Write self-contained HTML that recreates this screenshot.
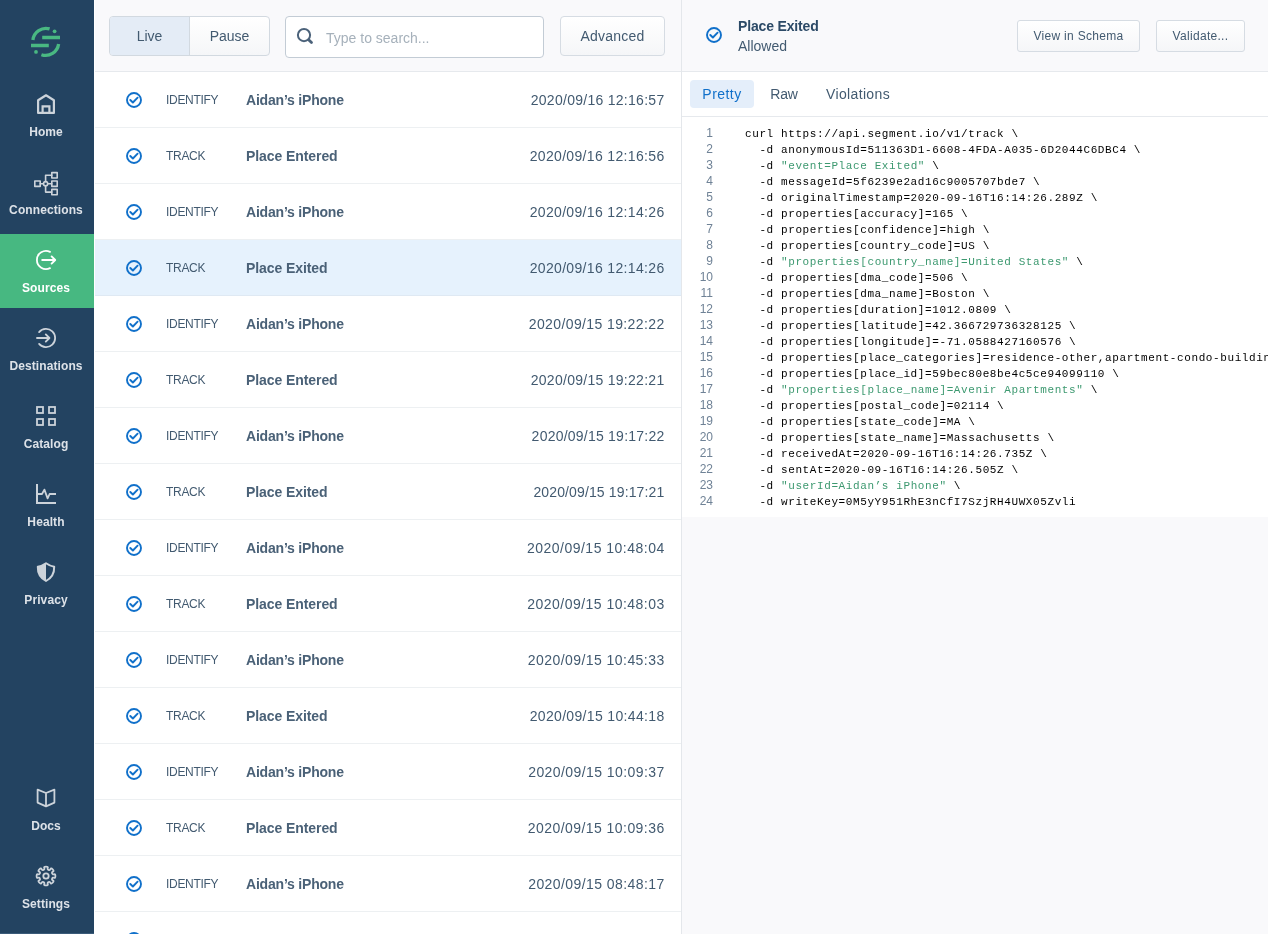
<!DOCTYPE html>
<html lang="en">
<head>
<meta charset="utf-8">
<title>Segment Debugger</title>
<style>
*{box-sizing:border-box;margin:0;padding:0}
html,body{width:1268px;height:934px;overflow:hidden;background:#fff;font-family:"Liberation Sans",Arial,sans-serif;color:#425a70}
#app{position:relative;width:1268px;height:934px;overflow:hidden;will-change:transform}
/* sidebar */
#side{position:absolute;left:0;top:0;width:94px;height:934px;background:#234361;border-bottom:1px solid #3b5b79}
#logo{position:absolute;left:29px;top:25px;width:34px;height:34px}
.nav{position:absolute;left:0;width:92px;height:74px;text-align:center;color:#dde2e8}
.nav.active{background:#47b881;color:#fff;width:94px}
.nav svg{position:absolute;left:34px;top:14px;width:24px;height:24px;fill:none;stroke:currentColor;stroke-width:1.8;stroke-linecap:round;stroke-linejoin:round;overflow:visible;color:#ccd3da}
.nav.active svg{color:#fff}
.nav span{position:absolute;left:0;width:92px;top:46px;font-size:12px;font-weight:bold;line-height:16px;letter-spacing:.1px}
/* list */
#list{position:absolute;left:94px;top:0;width:588px;height:934px;background:#fff;border-right:1px solid #e4e7eb}
#tool{position:absolute;left:1px;top:0;width:586px;height:72px;background:#f9f9fb;border-bottom:1px solid #e6e9ed}
.btn{position:absolute;height:40px;border:1px solid #d6dce3;border-radius:4px;background:linear-gradient(#fff,#f5f6f8);color:#425a70;font-size:14px;line-height:38px;text-align:center}
#seg{position:absolute;left:14px;top:16px;width:161px;height:40px;border:1px solid #d2d9e0;border-radius:4px;overflow:hidden;background:linear-gradient(#fff,#f5f6f8)}
#seg div{position:absolute;top:0;height:38px;line-height:38px;font-size:14px;text-align:center;color:#425a70}
#seg .a{left:0;width:80px;background:#e4ecf6;border-right:1px solid #d2d9e0}
#seg .b{left:80px;width:79px}
#search{position:absolute;left:190px;top:16px;width:259px;height:42px;border:1px solid #c3ccd5;border-radius:4px;background:#fff}
#search svg{position:absolute;left:11px;top:11px;width:16px;height:16px;overflow:visible}
#search span{position:absolute;left:40px;top:1px;line-height:40px;font-size:14px;color:#a6b1bb}
.row{position:absolute;left:1px;width:586px;height:56px;border-bottom:1px solid #edf0f2}
.row.sel{background:#e6f2fd;border-bottom-color:#dfe9f3}
.row svg{position:absolute;left:31px;top:19.5px;width:16px;height:16px}
.row .t{position:absolute;left:71px;top:0;line-height:56px;font-size:12px;color:#425a70;letter-spacing:-.3px}
.row .n{position:absolute;left:151px;top:0;line-height:56px;font-size:14px;font-weight:bold;color:#4a6177;letter-spacing:-.2px}
.row .d{position:absolute;right:16.600px;top:0;line-height:56px;font-size:14px;color:#425a70;letter-spacing:.2px}
/* detail */
#det{position:absolute;left:682px;top:0;width:586px;height:934px;background:#f9f9fb}
#dh{position:absolute;left:0;top:0;width:586px;height:72px;background:#f9f9fb;border-bottom:1px solid #e6e9ed}
#dh .ic{position:absolute;left:24px;top:27px;width:16px;height:16px}
#dh .ic svg{display:block;width:16px;height:16px}
.btn.sm{height:32px;line-height:30px;font-size:12px;border-radius:3px;letter-spacing:.3px}
#dh .ti{position:absolute;left:56px;top:17px;font-size:14px;font-weight:bold;line-height:18px;color:#2c4a67;letter-spacing:-.16px}
#dh .su{position:absolute;left:56px;top:37px;font-size:14px;line-height:18px;color:#425a70}
#tabs{position:absolute;left:0;top:72px;width:586px;height:45px;background:#fff;border-bottom:1px solid #e6e9ed}
#tabs div{position:absolute;top:8px;height:28px;line-height:28px;font-size:14px;color:#425a70;border-radius:4px;text-align:center}
#tabs .on{background:#e4eefa;color:#1070ca}
#code{position:absolute;left:0;top:117px;width:586px;height:400px;background:#fff;overflow:hidden}
#code .ln{position:absolute;left:0;width:31px;text-align:right;font-size:12px;line-height:16px;color:#6f8296}
#code pre{position:absolute;left:63px;top:9px;font-family:"Liberation Mono","Courier New",monospace;font-size:11px;letter-spacing:.6px;line-height:16px;color:#000;white-space:pre}
#code pre i{font-style:normal;color:#3d9970}
</style>
</head>
<body>
<div id="app">
<div id="side">
<svg id="logo" viewBox="0 0 34 34"><g fill="none" stroke="#49b882" stroke-width="3.3"><path d="M3.9 15.0 A13.1 13.1 0 0 1 20.6 3.900"/><path d="M29.6 19.0 A13.1 13.1 0 0 1 12.4 29.7"/><path d="M13.2 12.500 H31 M2 20.5 H19.8"/></g><circle cx="25.6" cy="6.3" r="1.9" fill="#49b882"/><circle cx="7.0" cy="26.9" r="1.9" fill="#49b882"/></svg>
<div class="nav" style="top:78px"><svg viewBox="0 0 24 24"><g stroke-width="2.2" stroke-linejoin="miter"><path d="M4.1 8.3 L12 3.3 L19.9 8.3 V20.9 H4.1 Z" stroke-linejoin="round"/><path d="M8.6 20.9 V14.3 H15.4 V20.9" /></g></svg><span>Home</span></div>
<div class="nav" style="top:156px"><svg viewBox="0 0 24 24"><g stroke-width="1.6" transform="translate(0 1.9)"><rect x="0.8" y="9.1" width="5.4" height="5.4"/><rect x="17.8" y="0.7" width="5.4" height="5.4"/><rect x="17.8" y="9.1" width="5.4" height="5.4"/><rect x="17.8" y="17.5" width="5.4" height="5.4"/><circle cx="11.6" cy="11.8" r="2.1"/><path d="M6.2 11.8 H9.5 M13.7 11.8 H17.8 M11.6 9.7 V3.4 H17.8 M11.6 13.9 V20.2 H17.8"/></g></svg><span>Connections</span></div>
<div class="nav active" style="top:234px"><svg viewBox="0 0 24 24"><path d="M16 3.82 A9.1 9.1 0 1 0 16 20.18"/><path d="M8.2 12 H21 M17.600 8.4 L21.2 12 L17.600 15.6" stroke-width="1.9"/></svg><span>Sources</span></div>
<div class="nav" style="top:312px"><svg viewBox="0 0 24 24"><path d="M5.1 6.1 A9.1 9.1 0 1 1 5.1 17.9"/><path d="M3 12 H15.2 M11.800 8.4 L15.4 12 L11.800 15.6" stroke-width="1.9"/></svg><span>Destinations</span></div>
<div class="nav" style="top:390px"><svg viewBox="0 0 24 24"><g stroke-width="1.8" stroke-linejoin="miter"><rect x="3" y="3" width="6" height="6"/><rect x="15" y="3" width="6" height="6"/><rect x="3" y="15" width="6" height="6"/><rect x="15" y="15" width="6" height="6"/></g></svg><span>Catalog</span></div>
<div class="nav" style="top:468px"><svg viewBox="0 0 24 24"><path d="M3 2 V21 H22" stroke-width="2" stroke-linecap="butt" stroke-linejoin="miter"/><path d="M4 12 H8 L10.4 7.6 L13.6 16.4 L15.6 12 H22" stroke-linecap="butt"/></svg><span>Health</span></div>
<div class="nav" style="top:546px"><svg viewBox="0 0 24 24"><path d="M12 3.2 C14.6 5 17.6 6.3 20.2 6.7 C20.4 13 17.4 18 12 21 C6.6 18 3.600 13 3.8 6.7 C6.4 6.300 9.4 5 12 3.2Z" stroke-width="2"/><path d="M12 3.2 C9.4 5 6.4 6.3 3.8 6.7 C3.6 13 6.600 18 12 21 Z" fill="currentColor" stroke="none"/></svg><span>Privacy</span></div>
<div class="nav" style="top:772px"><svg viewBox="0 0 24 24"><path d="M12 7 L3.6 3.600 V16.6 L12 20.4 L20.4 16.6 V3.6 Z M12 7 V20.4"/></svg><span>Docs</span></div>
<div class="nav" style="top:850px"><svg viewBox="0 0 24 24"><path d="M9.46 5.87 Q10.85 5.30 10.22 3.95 Q9.60 2.60 12.00 2.60 Q14.40 2.60 13.78 3.95 Q13.15 5.30 14.54 5.87 Q15.93 6.45 16.44 5.05 Q16.95 3.66 18.65 5.35 Q20.34 7.05 18.95 7.56 Q17.55 8.07 18.13 9.46 Q18.70 10.85 20.05 10.22 Q21.40 9.60 21.40 12.00 Q21.40 14.40 20.05 13.78 Q18.70 13.15 18.13 14.54 Q17.55 15.93 18.95 16.44 Q20.34 16.95 18.65 18.65 Q16.95 20.34 16.44 18.95 Q15.93 17.55 14.54 18.13 Q13.15 18.70 13.78 20.05 Q14.40 21.40 12.00 21.40 Q9.60 21.40 10.22 20.05 Q10.85 18.70 9.46 18.13 Q8.07 17.55 7.56 18.95 Q7.05 20.34 5.35 18.65 Q3.66 16.95 5.05 16.44 Q6.45 15.93 5.87 14.54 Q5.30 13.15 3.95 13.78 Q2.60 14.40 2.60 12.00 Q2.60 9.60 3.95 10.22 Q5.30 10.85 5.87 9.46 Q6.45 8.07 5.05 7.56 Q3.66 7.05 5.35 5.35 Q7.05 3.66 7.56 5.05 Q8.07 6.45 9.46 5.87Z"/><circle cx="12" cy="12" r="2.7"/></svg><span>Settings</span></div>
</div>
<div id="list">
<div id="tool"><div id="seg"><div class="a">Live</div><div class="b">Pause</div></div><div id="search"><svg viewBox="0 0 16 16"><circle cx="7" cy="7.1" r="6.1" fill="none" stroke="#4b627a" stroke-width="2"/><path d="M11.600 11.7 L14.500 14.6" stroke="#4b627a" stroke-width="2.800" stroke-linecap="round"/></svg><span>Type to search...</span></div><div class="btn" style="left:465px;top:16px;width:105px;letter-spacing:.2px">Advanced</div></div>
<div class="row" style="top:72px"><svg viewBox="0 0 16 16"><circle cx="8" cy="8" r="7" fill="none" stroke="#1070ca" stroke-width="1.9"/><path d="M4.3 8.0 L6.9 10.5 L11.6 5.7" fill="none" stroke="#1070ca" stroke-width="1.9" stroke-linecap="round" stroke-linejoin="round"/></svg><span class="t">IDENTIFY</span><span class="n">Aidan’s iPhone</span><span class="d" style="letter-spacing:0.28px;right:16.52px">2020/09/16 12:16:57</span></div>
<div class="row" style="top:128px"><svg viewBox="0 0 16 16"><circle cx="8" cy="8" r="7" fill="none" stroke="#1070ca" stroke-width="1.9"/><path d="M4.3 8.0 L6.9 10.5 L11.6 5.7" fill="none" stroke="#1070ca" stroke-width="1.9" stroke-linecap="round" stroke-linejoin="round"/></svg><span class="t">TRACK</span><span class="n" style="letter-spacing:-.08px">Place Entered</span><span class="d" style="letter-spacing:0.34px;right:16.46px">2020/09/16 12:16:56</span></div>
<div class="row" style="top:184px"><svg viewBox="0 0 16 16"><circle cx="8" cy="8" r="7" fill="none" stroke="#1070ca" stroke-width="1.9"/><path d="M4.3 8.0 L6.9 10.5 L11.6 5.7" fill="none" stroke="#1070ca" stroke-width="1.9" stroke-linecap="round" stroke-linejoin="round"/></svg><span class="t">IDENTIFY</span><span class="n">Aidan’s iPhone</span><span class="d" style="letter-spacing:0.34px;right:16.46px">2020/09/16 12:14:26</span></div>
<div class="row sel" style="top:240px"><svg viewBox="0 0 16 16"><circle cx="8" cy="8" r="7" fill="none" stroke="#1070ca" stroke-width="1.9"/><path d="M4.3 8.0 L6.9 10.5 L11.6 5.7" fill="none" stroke="#1070ca" stroke-width="1.9" stroke-linecap="round" stroke-linejoin="round"/></svg><span class="t">TRACK</span><span class="n" style="letter-spacing:-.08px">Place Exited</span><span class="d" style="letter-spacing:0.34px;right:16.46px">2020/09/16 12:14:26</span></div>
<div class="row" style="top:296px"><svg viewBox="0 0 16 16"><circle cx="8" cy="8" r="7" fill="none" stroke="#1070ca" stroke-width="1.9"/><path d="M4.3 8.0 L6.9 10.5 L11.6 5.7" fill="none" stroke="#1070ca" stroke-width="1.9" stroke-linecap="round" stroke-linejoin="round"/></svg><span class="t">IDENTIFY</span><span class="n">Aidan’s iPhone</span><span class="d" style="letter-spacing:0.39px;right:16.41px">2020/09/15 19:22:22</span></div>
<div class="row" style="top:352px"><svg viewBox="0 0 16 16"><circle cx="8" cy="8" r="7" fill="none" stroke="#1070ca" stroke-width="1.9"/><path d="M4.3 8.0 L6.9 10.5 L11.6 5.7" fill="none" stroke="#1070ca" stroke-width="1.9" stroke-linecap="round" stroke-linejoin="round"/></svg><span class="t">TRACK</span><span class="n" style="letter-spacing:-.08px">Place Entered</span><span class="d" style="letter-spacing:0.28px;right:16.52px">2020/09/15 19:22:21</span></div>
<div class="row" style="top:408px"><svg viewBox="0 0 16 16"><circle cx="8" cy="8" r="7" fill="none" stroke="#1070ca" stroke-width="1.9"/><path d="M4.3 8.0 L6.9 10.5 L11.6 5.7" fill="none" stroke="#1070ca" stroke-width="1.9" stroke-linecap="round" stroke-linejoin="round"/></svg><span class="t">IDENTIFY</span><span class="n">Aidan’s iPhone</span><span class="d" style="letter-spacing:0.23px;right:16.57px">2020/09/15 19:17:22</span></div>
<div class="row" style="top:464px"><svg viewBox="0 0 16 16"><circle cx="8" cy="8" r="7" fill="none" stroke="#1070ca" stroke-width="1.9"/><path d="M4.3 8.0 L6.9 10.5 L11.6 5.7" fill="none" stroke="#1070ca" stroke-width="1.9" stroke-linecap="round" stroke-linejoin="round"/></svg><span class="t">TRACK</span><span class="n" style="letter-spacing:-.08px">Place Exited</span><span class="d" style="letter-spacing:0.13px;right:16.67px">2020/09/15 19:17:21</span></div>
<div class="row" style="top:520px"><svg viewBox="0 0 16 16"><circle cx="8" cy="8" r="7" fill="none" stroke="#1070ca" stroke-width="1.9"/><path d="M4.3 8.0 L6.9 10.5 L11.6 5.7" fill="none" stroke="#1070ca" stroke-width="1.9" stroke-linecap="round" stroke-linejoin="round"/></svg><span class="t">IDENTIFY</span><span class="n">Aidan’s iPhone</span><span class="d" style="letter-spacing:0.49px;right:16.31px">2020/09/15 10:48:04</span></div>
<div class="row" style="top:576px"><svg viewBox="0 0 16 16"><circle cx="8" cy="8" r="7" fill="none" stroke="#1070ca" stroke-width="1.9"/><path d="M4.3 8.0 L6.9 10.5 L11.6 5.7" fill="none" stroke="#1070ca" stroke-width="1.9" stroke-linecap="round" stroke-linejoin="round"/></svg><span class="t">TRACK</span><span class="n" style="letter-spacing:-.08px">Place Entered</span><span class="d" style="letter-spacing:0.47px;right:16.33px">2020/09/15 10:48:03</span></div>
<div class="row" style="top:632px"><svg viewBox="0 0 16 16"><circle cx="8" cy="8" r="7" fill="none" stroke="#1070ca" stroke-width="1.9"/><path d="M4.3 8.0 L6.9 10.5 L11.6 5.7" fill="none" stroke="#1070ca" stroke-width="1.9" stroke-linecap="round" stroke-linejoin="round"/></svg><span class="t">IDENTIFY</span><span class="n">Aidan’s iPhone</span><span class="d" style="letter-spacing:0.44px;right:16.36px">2020/09/15 10:45:33</span></div>
<div class="row" style="top:688px"><svg viewBox="0 0 16 16"><circle cx="8" cy="8" r="7" fill="none" stroke="#1070ca" stroke-width="1.9"/><path d="M4.3 8.0 L6.9 10.5 L11.6 5.7" fill="none" stroke="#1070ca" stroke-width="1.9" stroke-linecap="round" stroke-linejoin="round"/></svg><span class="t">TRACK</span><span class="n" style="letter-spacing:-.08px">Place Exited</span><span class="d" style="letter-spacing:0.34px;right:16.46px">2020/09/15 10:44:18</span></div>
<div class="row" style="top:744px"><svg viewBox="0 0 16 16"><circle cx="8" cy="8" r="7" fill="none" stroke="#1070ca" stroke-width="1.9"/><path d="M4.3 8.0 L6.9 10.5 L11.6 5.7" fill="none" stroke="#1070ca" stroke-width="1.9" stroke-linecap="round" stroke-linejoin="round"/></svg><span class="t">IDENTIFY</span><span class="n">Aidan’s iPhone</span><span class="d" style="letter-spacing:0.42px;right:16.38px">2020/09/15 10:09:37</span></div>
<div class="row" style="top:800px"><svg viewBox="0 0 16 16"><circle cx="8" cy="8" r="7" fill="none" stroke="#1070ca" stroke-width="1.9"/><path d="M4.3 8.0 L6.9 10.5 L11.6 5.7" fill="none" stroke="#1070ca" stroke-width="1.9" stroke-linecap="round" stroke-linejoin="round"/></svg><span class="t">TRACK</span><span class="n" style="letter-spacing:-.08px">Place Entered</span><span class="d" style="letter-spacing:0.44px;right:16.36px">2020/09/15 10:09:36</span></div>
<div class="row" style="top:856px"><svg viewBox="0 0 16 16"><circle cx="8" cy="8" r="7" fill="none" stroke="#1070ca" stroke-width="1.9"/><path d="M4.3 8.0 L6.9 10.5 L11.6 5.7" fill="none" stroke="#1070ca" stroke-width="1.9" stroke-linecap="round" stroke-linejoin="round"/></svg><span class="t">IDENTIFY</span><span class="n">Aidan’s iPhone</span><span class="d" style="letter-spacing:0.42px;right:16.38px">2020/09/15 08:48:17</span></div>
<div class="row" style="top:912px"><svg viewBox="0 0 16 16"><circle cx="8" cy="8" r="7" fill="none" stroke="#1070ca" stroke-width="1.9"/><path d="M4.3 8.0 L6.9 10.5 L11.6 5.7" fill="none" stroke="#1070ca" stroke-width="1.9" stroke-linecap="round" stroke-linejoin="round"/></svg><span class="t">TRACK</span><span class="n" style="letter-spacing:-.08px">Place Exited</span><span class="d" style="letter-spacing:0.42px;right:16.38px">2020/09/15 08:48:16</span></div>
</div>
<div id="det">
<div id="dh"><div class="ic"><svg viewBox="0 0 16 16"><circle cx="8" cy="8" r="7" fill="none" stroke="#1070ca" stroke-width="1.9"/><path d="M4.3 8.0 L6.9 10.5 L11.6 5.7" fill="none" stroke="#1070ca" stroke-width="1.9" stroke-linecap="round" stroke-linejoin="round"/></svg></div><div class="ti">Place Exited</div><div class="su">Allowed</div><div class="btn sm" style="left:335px;top:20px;width:123px">View in Schema</div><div class="btn sm" style="left:474px;top:20px;width:89px">Validate...</div></div>
<div id="tabs"><div class="on" style="left:8px;width:64px;letter-spacing:.45px">Pretty</div><div style="left:76px;width:52px;letter-spacing:-.2px">Raw</div><div style="left:132px;width:88px;letter-spacing:.36px">Violations</div></div>
<div id="code"><div class="ln" style="top:8px">1</div><div class="ln" style="top:24px">2</div><div class="ln" style="top:40px">3</div><div class="ln" style="top:56px">4</div><div class="ln" style="top:72px">5</div><div class="ln" style="top:88px">6</div><div class="ln" style="top:104px">7</div><div class="ln" style="top:120px">8</div><div class="ln" style="top:136px">9</div><div class="ln" style="top:152px">10</div><div class="ln" style="top:168px">11</div><div class="ln" style="top:184px">12</div><div class="ln" style="top:200px">13</div><div class="ln" style="top:216px">14</div><div class="ln" style="top:232px">15</div><div class="ln" style="top:248px">16</div><div class="ln" style="top:264px">17</div><div class="ln" style="top:280px">18</div><div class="ln" style="top:296px">19</div><div class="ln" style="top:312px">20</div><div class="ln" style="top:328px">21</div><div class="ln" style="top:344px">22</div><div class="ln" style="top:360px">23</div><div class="ln" style="top:376px">24</div><pre>curl https://api.segment.io/v1/track \
  -d anonymousId=511363D1-6608-4FDA-A035-6D2044C6DBC4 \
  -d <i>"event=Place Exited"</i> \
  -d messageId=5f6239e2ad16c9005707bde7 \
  -d originalTimestamp=2020-09-16T16:14:26.289Z \
  -d properties[accuracy]=165 \
  -d properties[confidence]=high \
  -d properties[country_code]=US \
  -d <i>"properties[country_name]=United States"</i> \
  -d properties[dma_code]=506 \
  -d properties[dma_name]=Boston \
  -d properties[duration]=1012.0809 \
  -d properties[latitude]=42.366729736328125 \
  -d properties[longitude]=-71.0588427160576 \
  -d properties[place_categories]=residence-other,apartment-condo-building \
  -d properties[place_id]=59bec80e8be4c5ce94099110 \
  -d <i>"properties[place_name]=Avenir Apartments"</i> \
  -d properties[postal_code]=02114 \
  -d properties[state_code]=MA \
  -d properties[state_name]=Massachusetts \
  -d receivedAt=2020-09-16T16:14:26.735Z \
  -d sentAt=2020-09-16T16:14:26.505Z \
  -d <i>"userId=Aidan’s iPhone"</i> \
  -d writeKey=0M5yY951RhE3nCfI7SzjRH4UWX05Zvli</pre></div>
</div>
</div>
</body>
</html>
